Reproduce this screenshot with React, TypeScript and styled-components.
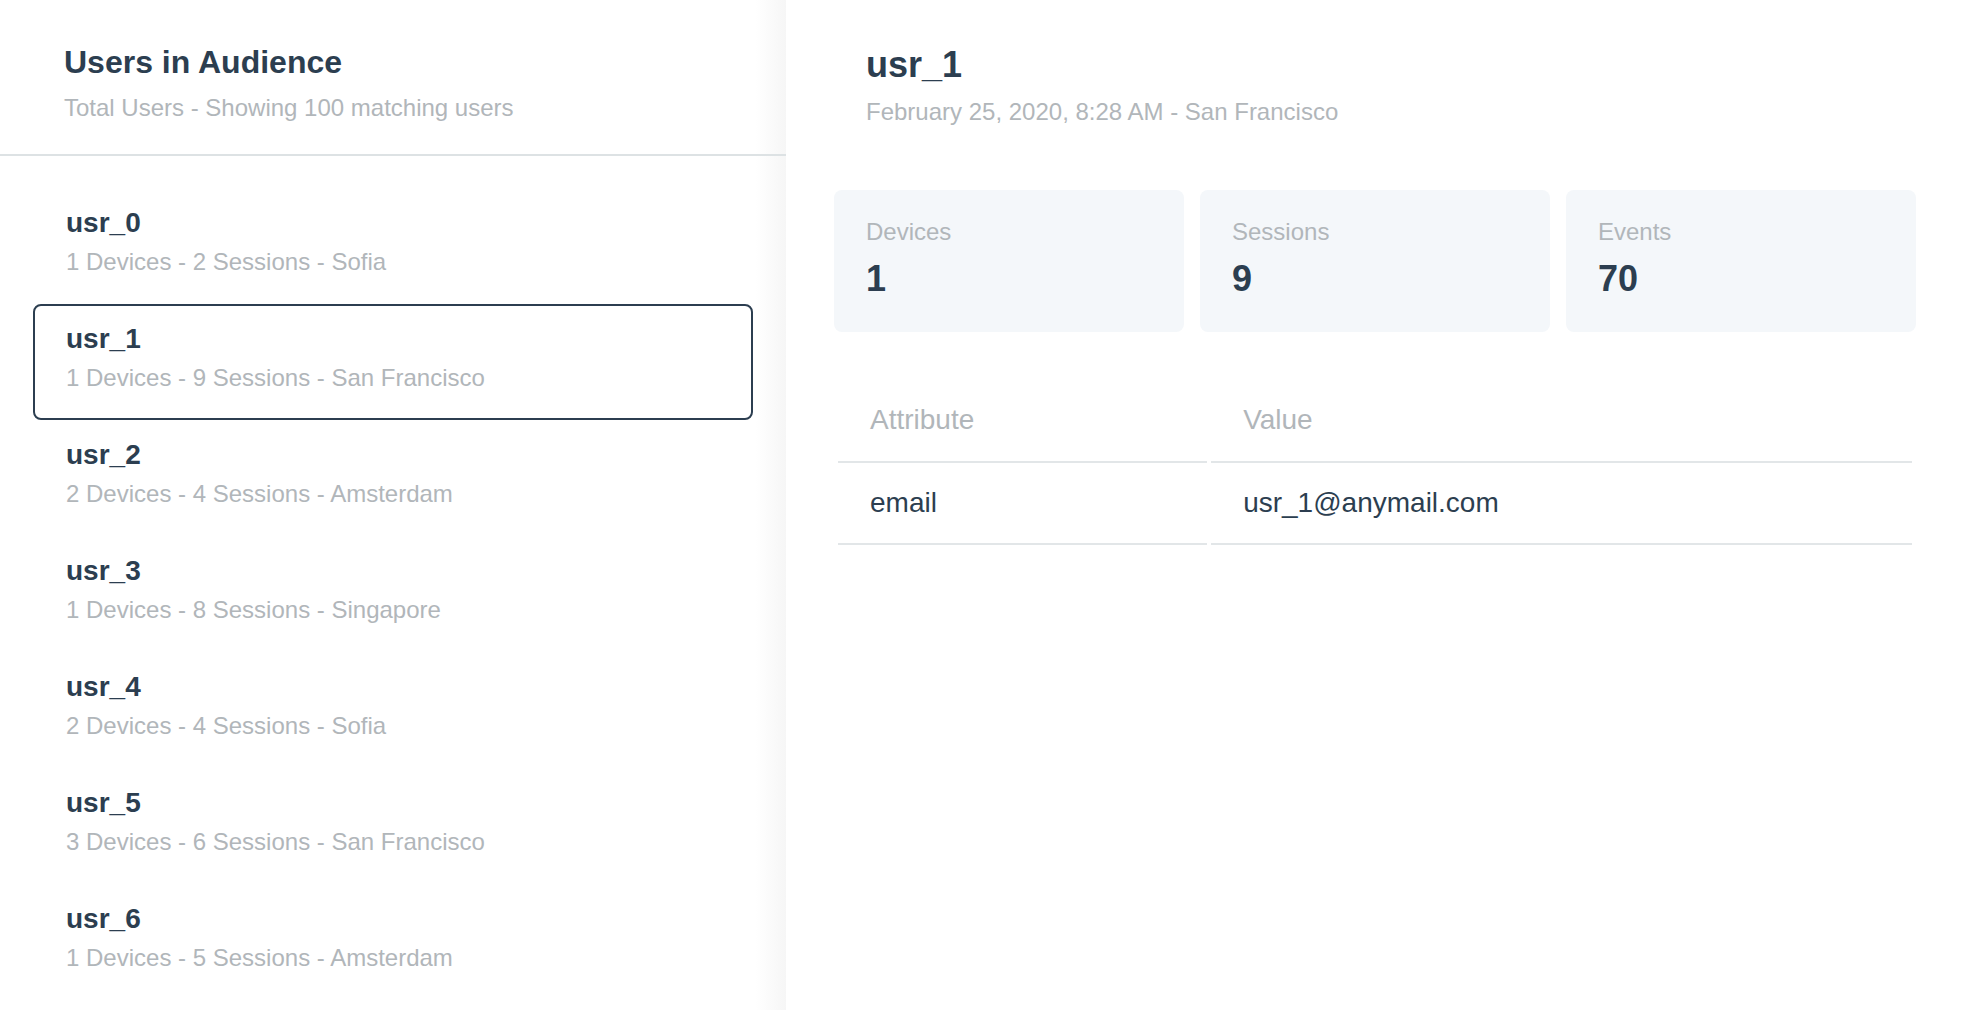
import React, { useState } from 'react';
import styled, { createGlobalStyle } from 'styled-components';

const GlobalStyle = createGlobalStyle`
  html, body {
    margin: 0;
    padding: 0;
    background: #fff;
  }
  body {
    font-family: "Liberation Sans", Arial, Helvetica, sans-serif;
    color: #2c3e50;
  }
  * {
    box-sizing: border-box;
  }
`;

const Layout = styled.div`
  display: flex;
  height: 1010px;
  overflow: hidden;
`;

const Sidebar = styled.aside`
  width: 786px;
  flex-shrink: 0;
  height: 100%;
  overflow: hidden;
  background: linear-gradient(to right, #fff calc(100% - 30px), #f6f6f6 100%);
`;

const SidebarHeader = styled.header`
  padding: 43px 0 32px 64px;
  border-bottom: 2px solid #dde2e4;
`;

const DetailHeader = styled.header`
  padding: 43px 0 0 32px;
`;

const Title = styled.h1<{ $large?: boolean }>`
  margin: 0;
  font-size: ${(p) => (p.$large ? 36 : 32)}px;
  line-height: ${(p) => (p.$large ? 43 : 38)}px;
  font-weight: 700;
  color: #2c3e50;
`;

const Subtitle = styled.p<{ $gap?: number }>`
  margin: ${(p) => p.$gap ?? 12}px 0 0;
  font-size: 24px;
  line-height: 29px;
  color: #b1b6ba;
`;

const UserList = styled.ul`
  list-style: none;
  margin: 0;
  padding: 32px 33px 0 33px;
`;

const UserItem = styled.li<{ $active: boolean }>`
  padding: 16px 31px 26px;
  border: 2px solid ${(p) => (p.$active ? '#2c3e50' : 'transparent')};
  border-radius: 8px;
  cursor: pointer;
`;

const UserName = styled.div`
  font-size: 28px;
  line-height: 34px;
  font-weight: 700;
  color: #2c3e50;
`;

const UserMeta = styled.div`
  margin-top: 7px;
  font-size: 24px;
  line-height: 29px;
  color: #b1b6ba;
`;

const Detail = styled.main`
  flex: 1;
  padding: 0 48px;
`;

const StatGrid = styled.div`
  display: grid;
  grid-template-columns: repeat(3, 1fr);
  gap: 16px;
  margin-top: 64px;
`;

const StatCard = styled.div`
  height: 142px;
  padding: 27px 32px 0;
  background: #f4f7fa;
  border-radius: 8px;
`;

const StatLabel = styled.div`
  font-size: 24px;
  line-height: 29px;
  color: #b1b6ba;
`;

const StatValue = styled.div`
  margin-top: 11px;
  font-size: 36px;
  line-height: 43px;
  font-weight: 700;
  color: #2c3e50;
`;

const AttrTable = styled.table`
  width: 100%;
  margin-top: 47px;
  border-collapse: separate;
  border-spacing: 4px 0;
  font-size: 28px;
  line-height: 34px;
`;

const HeadCell = styled.th`
  padding: 24px 32px;
  text-align: left;
  font-weight: 400;
  color: #b1b6ba;
  border-bottom: 2px solid #e2e6e8;

  &:first-child {
    width: 34.5%;
  }
`;

const Cell = styled.td`
  padding: 23px 32px;
  color: #2c3e50;
  border-bottom: 2px solid #e2e6e8;
`;

interface User {
  id: string;
  devices: number;
  sessions: number;
  events: number;
  city: string;
  seen: string;
}

const users: User[] = [
  { id: 'usr_0', devices: 1, sessions: 2, events: 14, city: 'Sofia', seen: 'February 24, 2020, 3:12 PM' },
  { id: 'usr_1', devices: 1, sessions: 9, events: 70, city: 'San Francisco', seen: 'February 25, 2020, 8:28 AM' },
  { id: 'usr_2', devices: 2, sessions: 4, events: 31, city: 'Amsterdam', seen: 'February 23, 2020, 6:40 PM' },
  { id: 'usr_3', devices: 1, sessions: 8, events: 52, city: 'Singapore', seen: 'February 22, 2020, 11:05 AM' },
  { id: 'usr_4', devices: 2, sessions: 4, events: 27, city: 'Sofia', seen: 'February 21, 2020, 9:50 AM' },
  { id: 'usr_5', devices: 3, sessions: 6, events: 44, city: 'San Francisco', seen: 'February 20, 2020, 1:17 PM' },
  { id: 'usr_6', devices: 1, sessions: 5, events: 38, city: 'Amsterdam', seen: 'February 19, 2020, 4:33 PM' },
];

const App: React.FC = () => {
  const [selected, setSelected] = useState('usr_1');
  const user = users.find((u) => u.id === selected) ?? users[0];

  return (
    <>
      <GlobalStyle />
      <Layout>
        <Sidebar>
          <SidebarHeader>
            <Title>Users in Audience</Title>
            <Subtitle>Total Users - Showing 100 matching users</Subtitle>
          </SidebarHeader>
          <UserList>
            {users.map((u) => (
              <UserItem key={u.id} $active={u.id === selected} onClick={() => setSelected(u.id)}>
                <UserName>{u.id}</UserName>
                <UserMeta>
                  {u.devices} Devices - {u.sessions} Sessions - {u.city}
                </UserMeta>
              </UserItem>
            ))}
          </UserList>
        </Sidebar>

        <Detail>
          <DetailHeader>
            <Title $large>{user.id}</Title>
            <Subtitle $gap={11}>
              {user.seen} - {user.city}
            </Subtitle>
          </DetailHeader>

          <StatGrid>
            <StatCard>
              <StatLabel>Devices</StatLabel>
              <StatValue>{user.devices}</StatValue>
            </StatCard>
            <StatCard>
              <StatLabel>Sessions</StatLabel>
              <StatValue>{user.sessions}</StatValue>
            </StatCard>
            <StatCard>
              <StatLabel>Events</StatLabel>
              <StatValue>{user.events}</StatValue>
            </StatCard>
          </StatGrid>

          <AttrTable>
            <thead>
              <tr>
                <HeadCell>Attribute</HeadCell>
                <HeadCell>Value</HeadCell>
              </tr>
            </thead>
            <tbody>
              <tr>
                <Cell>email</Cell>
                <Cell>{user.id}@anymail.com</Cell>
              </tr>
            </tbody>
          </AttrTable>
        </Detail>
      </Layout>
    </>
  );
};

export default App;
